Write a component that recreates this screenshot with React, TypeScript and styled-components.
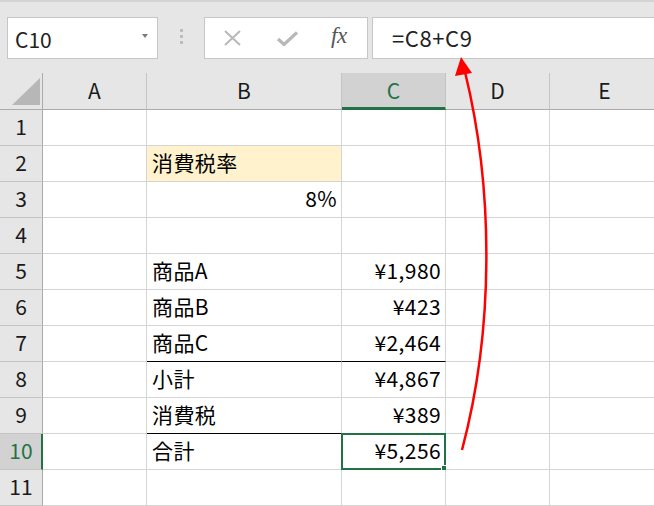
import styled, { createGlobalStyle, css } from "styled-components";

const GlobalStyle = createGlobalStyle`
  html, body {
    margin: 0;
    padding: 0;
    background: #e6e6e6;
    overflow: hidden;
  }
  body {
    font-family: "Noto Sans CJK JP", "Noto Sans", sans-serif;
    color: #000;
  }
`;

const Page = styled.div`
  position: relative;
  width: 654px;
  height: 506px;
  overflow: hidden;
  background: #e6e6e6;
  border-top: 2px solid #d4d4d4;
  box-sizing: border-box;
`;

const Toolbar = styled.div`
  display: flex;
  align-items: center;
  height: 71px;
  padding: 15px 0 14px 7px;
  box-sizing: border-box;
`;

const NameBox = styled.div`
  display: flex;
  align-items: center;
  justify-content: space-between;
  width: 151px;
  height: 42px;
  box-sizing: border-box;
  background: #fff;
  border: 1px solid #c6c6c6;
  padding: 2px 9px 0 7px;
  font-size: 21px;
  color: #222;
`;

const DropArrow = styled.span`
  width: 0;
  height: 0;
  border-left: 3.5px solid transparent;
  border-right: 3.5px solid transparent;
  border-top: 4px solid #7a7a7a;
  margin-top: -6px;
`;

const Grip = styled.div`
  display: flex;
  flex-direction: column;
  gap: 3px;
  width: 46px;
  align-items: center;
  margin-top: -4px;
  span {
    width: 3px;
    height: 3px;
    background: #bdbdbd;
  }
`;

const FxBox = styled.div`
  display: flex;
  align-items: center;
  width: 164px;
  height: 42px;
  box-sizing: border-box;
  background: #fff;
  border: 1px solid #c6c6c6;
  padding-left: 19px;
  gap: 36px;
`;

const Fx = styled.span`
  font-family: "Liberation Serif", "DejaVu Serif", serif;
  font-style: italic;
  font-size: 23px;
  color: #555;
  margin-left: -3px;
  letter-spacing: -0.5px;
  margin-top: -4px;
`;

const FormulaInput = styled.div`
  flex: 1;
  height: 42px;
  box-sizing: border-box;
  background: #fff;
  border: 1px solid #c6c6c6;
  border-right: none;
  margin-left: 4px;
  padding: 0 0 2px 19px;
  display: flex;
  align-items: center;
  font-size: 22px;
  letter-spacing: 0.6px;
  color: #222;
`;

const Sheet = styled.div`
  display: grid;
  grid-template-columns: 43px 104px 195px 104px 104px 110px;
  grid-auto-rows: 36px;
  grid-template-rows: 37px;
  background: #fff;
`;

const ColHead = styled.div<{ $active?: boolean }>`
  display: flex;
  align-items: center;
  justify-content: center;
  box-sizing: border-box;
  background: #e6e6e6;
  border-right: 1px solid #c4c4c4;
  border-bottom: 1px solid #ababab;
  padding-bottom: 3px;
  font-size: 21px;
  color: #1a1a1a;
  ${({ $active }) =>
    $active &&
    css`
      background: #d2d2d2;
      color: #217346;
      border-bottom: 3px solid #217346;
      padding-bottom: 1px;
    `}
`;

const Corner = styled.div`
  box-sizing: border-box;
  background: #e6e6e6;
  border-right: 1px solid #ababab;
  border-bottom: 1px solid #ababab;
`;

const RowHead = styled.div<{ $active?: boolean }>`
  display: flex;
  align-items: center;
  justify-content: center;
  box-sizing: border-box;
  background: #e6e6e6;
  border-right: 1px solid #ababab;
  border-bottom: 1px solid #c4c4c4;
  padding-bottom: 4px;
  font-size: 21px;
  color: #1a1a1a;
  ${({ $active }) =>
    $active &&
    css`
      background: #d2d2d2;
      color: #217346;
      border-right: 2px solid #217346;
      padding-left: 1px;
    `}
`;

const Cell = styled.div<{
  $align?: "left" | "right";
  $fill?: string;
  $line?: boolean;
  $selected?: boolean;
}>`
  position: relative;
  display: flex;
  align-items: center;
  justify-content: ${({ $align }) => ($align === "right" ? "flex-end" : "flex-start")};
  box-sizing: border-box;
  padding: 0 4px 3px 5px;
  border-right: 1px solid #d4d4d4;
  border-bottom: 1px solid ${({ $line }) => ($line ? "#000" : "#d4d4d4")};
  background: ${({ $fill }) => $fill || "#fff"};
  font-size: 21px;
  letter-spacing: 0.4px;
  white-space: nowrap;
  ${({ $selected }) =>
    $selected &&
    css`
      &::before {
        content: "";
        position: absolute;
        left: -1px;
        top: -1px;
        right: -1px;
        bottom: -1px;
        border: 2px solid #217346;
      }
      &::after {
        content: "";
        position: absolute;
        right: -4px;
        bottom: -4px;
        width: 6px;
        height: 6px;
        background: #217346;
        border: 1px solid #fff;
      }
    `}
`;

const Overlay = styled.svg`
  position: absolute;
  left: 0;
  top: -2px;
  pointer-events: none;
`;

type RowData = {
  b?: string;
  c?: string;
  bAlign?: "left" | "right";
  bFill?: string;
  line?: boolean;
  selected?: boolean;
};

const rows: RowData[] = [
  {},
  { b: "消費税率", bFill: "#fff2cc" },
  { b: "8%", bAlign: "right" },
  {},
  { b: "商品A", c: "¥1,980" },
  { b: "商品B", c: "¥423" },
  { b: "商品C", c: "¥2,464", line: true },
  { b: "小計", c: "¥4,867" },
  { b: "消費税", c: "¥389", line: true },
  { b: "合計", c: "¥5,256", selected: true },
  {},
];

const cols = ["A", "B", "C", "D", "E"];

export default function App() {
  return (
    <>
      <GlobalStyle />
      <Page>
        <Toolbar>
          <NameBox>
            C10
            <DropArrow />
          </NameBox>
          <Grip>
            <span />
            <span />
            <span />
          </Grip>
          <FxBox>
            <svg width="17" height="16" viewBox="0 0 17 16">
              <path d="M1 1 L16 15 M16 1 L1 15" stroke="#b8b8b8" strokeWidth="2" fill="none" />
            </svg>
            <svg width="21" height="15" viewBox="0 0 21 15">
              <path d="M1 8 L7 13.5 L20 1.5" stroke="#b8b8b8" strokeWidth="3.2" fill="none" />
            </svg>
            <Fx>fx</Fx>
          </FxBox>
          <FormulaInput>=C8+C9</FormulaInput>
        </Toolbar>
        <Sheet>
          <Corner>
            <svg width="42" height="36" viewBox="0 0 42 36">
              <polygon points="40,5 40,32 12,32" fill="#b7b7b7" />
            </svg>
          </Corner>
          {cols.map((c) => (
            <ColHead key={c} $active={c === "C"}>
              {c}
            </ColHead>
          ))}
          {rows.map((r, i) => (
            <Row key={i} n={i + 1} data={r} />
          ))}
        </Sheet>
        <Overlay width="654" height="506" viewBox="0 0 654 506">
          <path
            d="M462 450 C494 330 494 190 465 72"
            stroke="#ff0000"
            strokeWidth="2.5"
            fill="none"
          />
          <polygon points="461,57 472,73 455,76" fill="#ff0000" />
        </Overlay>
      </Page>
    </>
  );
}

function Row({ n, data }: { n: number; data: RowData }) {
  return (
    <>
      <RowHead $active={data.selected}>{n}</RowHead>
      <Cell />
      <Cell $align={data.bAlign} $fill={data.bFill} $line={data.line}>
        {data.b}
      </Cell>
      <Cell $align="right" $line={data.line} $selected={data.selected}>
        {data.c}
      </Cell>
      <Cell />
      <Cell />
    </>
  );
}
